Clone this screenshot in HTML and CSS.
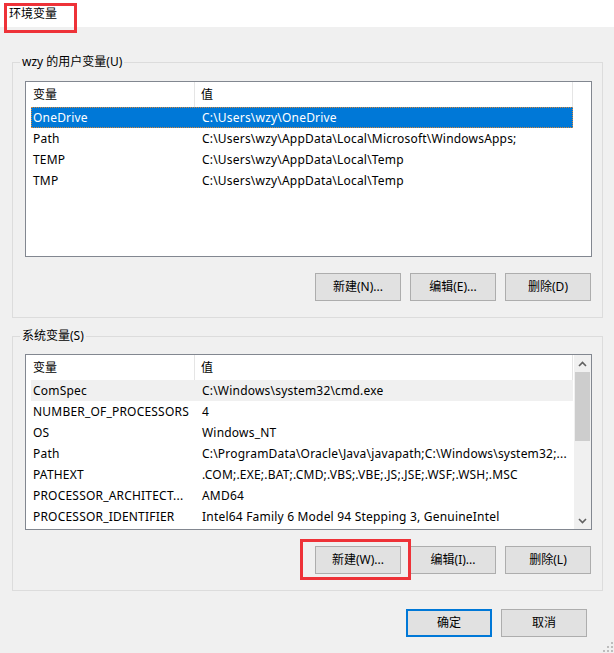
FILE: index.html
```html
<!DOCTYPE html>
<html lang="zh-CN">
<head>
<meta charset="utf-8">
<title>环境变量</title>
<link rel="stylesheet" href="styles.css">
</head>
<body>
<div class="window">
  <div class="titlebar">
    <span class="title">环境变量</span>
    <span class="annot annot-title"></span>
  </div>
  <div class="content">
    <div class="group">
      <span class="group-label">wzy 的用户变量(U)</span>
      <div class="listview">
        <div class="lv-main">
          <div class="lv-header">
            <div class="hcell hname">变量</div>
            <div class="hcell hvalue">值</div>
          </div>
          <div class="lv-body">
            <div class="row selected"><span class="cname">OneDrive</span><span class="cvalue">C:\Users\wzy\OneDrive</span></div>
            <div class="row"><span class="cname">Path</span><span class="cvalue">C:\Users\wzy\AppData\Local\Microsoft\WindowsApps;</span></div>
            <div class="row"><span class="cname">TEMP</span><span class="cvalue">C:\Users\wzy\AppData\Local\Temp</span></div>
            <div class="row"><span class="cname">TMP</span><span class="cvalue">C:\Users\wzy\AppData\Local\Temp</span></div>
          </div>
        </div>
      </div>
      <div class="btnrow">
        <button class="btn">新建(N)...</button>
        <button class="btn">编辑(E)...</button>
        <button class="btn">删除(D)</button>
      </div>
    </div>

    <div class="group group2">
      <span class="group-label">系统变量(S)</span>
      <div class="listview">
        <div class="lv-main">
          <div class="lv-header">
            <div class="hcell hname">变量</div>
            <div class="hcell hvalue">值</div>
          </div>
          <div class="lv-body">
            <div class="row hover"><span class="cname">ComSpec</span><span class="cvalue">C:\Windows\system32\cmd.exe</span></div>
            <div class="row"><span class="cname">NUMBER_OF_PROCESSORS</span><span class="cvalue">4</span></div>
            <div class="row"><span class="cname">OS</span><span class="cvalue">Windows_NT</span></div>
            <div class="row"><span class="cname">Path</span><span class="cvalue">C:\ProgramData\Oracle\Java\javapath;C:\Windows\system32;...</span></div>
            <div class="row"><span class="cname">PATHEXT</span><span class="cvalue">.COM;.EXE;.BAT;.CMD;.VBS;.VBE;.JS;.JSE;.WSF;.WSH;.MSC</span></div>
            <div class="row"><span class="cname">PROCESSOR_ARCHITECT...</span><span class="cvalue">AMD64</span></div>
            <div class="row"><span class="cname">PROCESSOR_IDENTIFIER</span><span class="cvalue">Intel64 Family 6 Model 94 Stepping 3, GenuineIntel</span></div>
          </div>
        </div>
        <div class="scrollbar">
          <div class="sb-arrow">
            <svg width="9" height="6" viewBox="0 0 9 6"><polyline points="1,5 4.5,1.5 8,5" fill="none" stroke="#606060" stroke-width="1.6"/></svg>
          </div>
          <div class="sb-track">
            <div class="sb-thumb"></div>
          </div>
          <div class="sb-arrow">
            <svg width="9" height="6" viewBox="0 0 9 6"><polyline points="1,1 4.5,4.5 8,1" fill="none" stroke="#606060" stroke-width="1.6"/></svg>
          </div>
        </div>
      </div>
      <div class="btnrow">
        <span class="annot-wrap"><button class="btn">新建(W)...</button><span class="annot annot-btn"></span></span>
        <button class="btn">编辑(I)...</button>
        <button class="btn">删除(L)</button>
      </div>
    </div>

    <div class="dlgrow">
      <button class="btn btn-default">确定</button>
      <button class="btn">取消</button>
    </div>
  </div>
  <div class="grip">
    <svg width="10" height="10" viewBox="0 0 10 10" fill="#bdbdbd">
      <rect x="8" y="0" width="2" height="2"/>
      <rect x="4" y="4" width="2" height="2"/><rect x="8" y="4" width="2" height="2"/>
      <rect x="0" y="8" width="2" height="2"/><rect x="4" y="8" width="2" height="2"/><rect x="8" y="8" width="2" height="2"/>
    </svg>
  </div>
</div>
</body>
</html>
```
FILE: styles.css
```css
* { box-sizing: border-box; }
html, body {
  margin: 0;
  padding: 0;
  background: #f0f0f0;
}
body {
  font-family: "Noto Sans", "Noto Sans CJK SC", sans-serif;
  font-size: 12px;
  color: #000;
}
.window {
  position: relative;
  width: 614px;
  height: 653px;
  overflow: hidden;
}
.titlebar {
  position: relative;
  height: 27px;
  background: #fff;
  padding-left: 9px;
  line-height: 27px;
}
.annot {
  position: absolute;
  border: 3px solid #ee3238;
  pointer-events: none;
}
.annot-title {
  left: 4px;
  top: 3px;
  width: 73px;
  height: 30px;
}
.content {
  padding: 0 11px 0 12px;
}
.group {
  position: relative;
  margin-top: 35px;
  border: 1px solid #dcdcdc;
  padding: 18px 10px 16px 12px;
}
.group2 {
  margin-top: 18px;
  padding-top: 17px;
}
.group-label {
  position: absolute;
  top: -9px;
  left: 7px;
  padding: 0 2px;
  line-height: 16px;
  background: #f0f0f0;
}
.listview {
  display: flex;
  height: 176px;
  border: 1px solid #828790;
  background: #fff;
}
.lv-main {
  flex: 1;
  min-width: 0;
}
.lv-header {
  display: flex;
  height: 25px;
  width: 547px;
  border-right: 1px solid #e5e5e5;
}
.hcell {
  line-height: 26px;
  white-space: nowrap;
}
.hname {
  width: 169px;
  padding-left: 7px;
  border-right: 1px solid #e5e5e5;
}
.hvalue {
  padding-left: 6px;
}
.lv-body {
  padding-left: 5px;
}
.row {
  display: flex;
  width: 542px;
  height: 21px;
  line-height: 20px;
  border: 1px solid transparent;
  white-space: nowrap;
  letter-spacing: 0.2px;
}
.row.selected {
  background: #0078d7;
  color: #fff;
  border: 1px dotted #d8883a;
}
.row.hover {
  background: #f0f0f0;
}
.cname {
  width: 169px;
  padding-left: 1px;
  overflow: hidden;
}
.cvalue {
  flex: 1;
  padding-left: 1px;
  overflow: hidden;
}
.scrollbar {
  width: 17px;
  margin-left: auto;
  background: #f0f0f0;
  display: flex;
  flex-direction: column;
}
.sb-arrow {
  height: 17px;
  display: flex;
  align-items: center;
  justify-content: center;
}
.sb-track {
  flex: 1;
  padding: 0 1px;
}
.sb-thumb {
  height: 69px;
  background: #cdcdcd;
}
.btnrow {
  display: flex;
  justify-content: flex-end;
  gap: 9px;
  margin-top: 16px;
  padding-right: 1px;
}
.btn {
  width: 86px;
  height: 28px;
  border: 1px solid #adadad;
  background: #e1e1e1;
  font-family: inherit;
  font-size: 12px;
  color: #000;
  padding: 0;
  line-height: 26px;
}
.annot-wrap {
  position: relative;
  display: flex;
}
.annot-btn {
  left: -15px;
  top: -7px;
  right: -10px;
  bottom: -6px;
}
.dlgrow {
  display: flex;
  justify-content: flex-end;
  gap: 9px;
  margin-top: 18px;
  padding-right: 16px;
}
.btn-default {
  border: 2px solid #0078d7;
  line-height: 24px;
}
.grip {
  position: absolute;
  right: 1px;
  bottom: 1px;
  line-height: 0;
}
```
